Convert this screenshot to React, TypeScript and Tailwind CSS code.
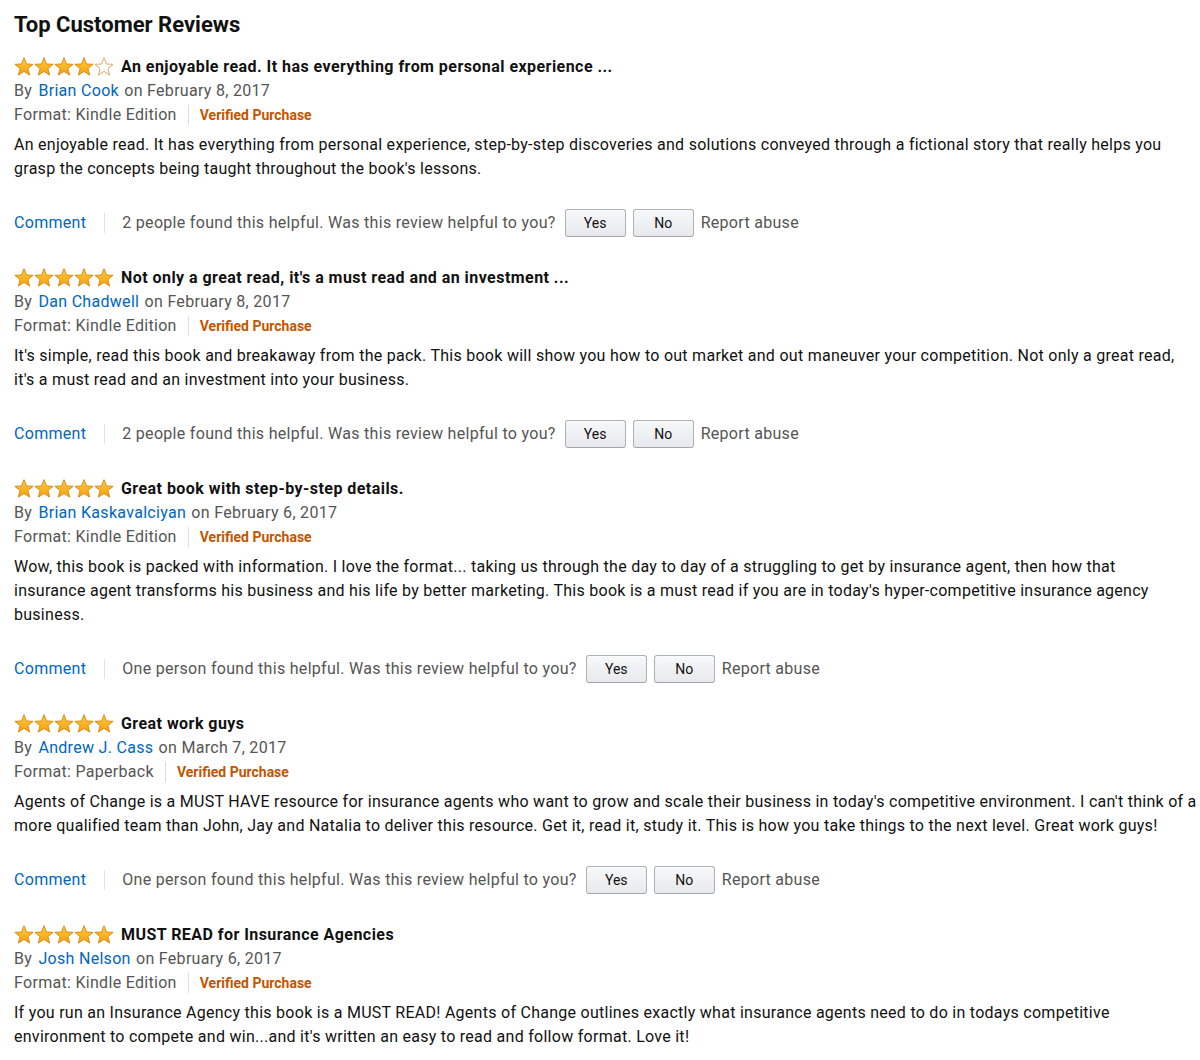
import { useId } from "react";

type Review = {
  stars: number;
  title: string;
  author: string;
  date: string;
  format: string;
  body: string[];
  helpful: string;
};

const reviews: Review[] = [
  {
    stars: 4,
    title: "An enjoyable read. It has everything from personal experience ...",
    author: "Brian Cook",
    date: "February 8, 2017",
    format: "Kindle Edition",
    body: [
      "An enjoyable read. It has everything from personal experience, step-by-step discoveries and solutions conveyed through a fictional story that really helps you",
      "grasp the concepts being taught throughout the book's lessons.",
    ],
    helpful: "2 people found this helpful. Was this review helpful to you?",
  },
  {
    stars: 5,
    title: "Not only a great read, it's a must read and an investment ...",
    author: "Dan Chadwell",
    date: "February 8, 2017",
    format: "Kindle Edition",
    body: [
      "It's simple, read this book and breakaway from the pack. This book will show you how to out market and out maneuver your competition. Not only a great read,",
      "it's a must read and an investment into your business.",
    ],
    helpful: "2 people found this helpful. Was this review helpful to you?",
  },
  {
    stars: 5,
    title: "Great book with step-by-step details.",
    author: "Brian Kaskavalciyan",
    date: "February 6, 2017",
    format: "Kindle Edition",
    body: [
      "Wow, this book is packed with information. I love the format... taking us through the day to day of a struggling to get by insurance agent, then how that",
      "insurance agent transforms his business and his life by better marketing. This book is a must read if you are in today's hyper-competitive insurance agency",
      "business.",
    ],
    helpful: "One person found this helpful. Was this review helpful to you?",
  },
  {
    stars: 5,
    title: "Great work guys",
    author: "Andrew J. Cass",
    date: "March 7, 2017",
    format: "Paperback",
    body: [
      "Agents of Change is a MUST HAVE resource for insurance agents who want to grow and scale their business in today's competitive environment. I can't think of a",
      "more qualified team than John, Jay and Natalia to deliver this resource. Get it, read it, study it. This is how you take things to the next level. Great work guys!",
    ],
    helpful: "One person found this helpful. Was this review helpful to you?",
  },
  {
    stars: 5,
    title: "MUST READ for Insurance Agencies",
    author: "Josh Nelson",
    date: "February 6, 2017",
    format: "Kindle Edition",
    body: [
      "If you run an Insurance Agency this book is a MUST READ! Agents of Change outlines exactly what insurance agents need to do in todays competitive",
      "environment to compete and win...and it's written an easy to read and follow format. Love it!",
    ],
    helpful: "",
  },
];

const STAR = "10,0.7 12.41,6.98 19.13,7.33 13.9,11.57 15.64,18.07 10,14.4 4.36,18.07 6.1,11.57 0.87,7.33 7.59,6.98";

function Star({ filled }: { filled: boolean }) {
  const id = useId().replace(/:/g, "");
  return (
    <svg width="20" height="20" viewBox="0 0 20 20" className="block">
      <defs>
        <linearGradient id={id} x1="0" y1="0" x2="0" y2="1">
          <stop offset="0" stopColor="#ffce3a" />
          <stop offset="1" stopColor="#f59f12" />
        </linearGradient>
      </defs>
      <polygon
        points={STAR}
        fill={filled ? `url(#${id})` : "#ffffff"}
        stroke={filled ? "#dc8c14" : "#dcab6a"}
        strokeWidth="1"
        strokeLinejoin="round"
      />
    </svg>
  );
}

function Stars({ n }: { n: number }) {
  return (
    <div className="flex">
      {[0, 1, 2, 3, 4].map((i) => (
        <Star key={i} filled={i < n} />
      ))}
    </div>
  );
}

function Btn({ label }: { label: string }) {
  return (
    <button className="h-[28px] w-[61px] rounded-[3px] border border-[#adb1b8] border-b-[#a2a6ac] bg-gradient-to-b from-[#f7f8fa] to-[#e7e9ec] text-[14px] leading-none tracking-normal text-[#111] shadow-[inset_0_1px_0_rgba(255,255,255,0.6)]">
      {label}
    </button>
  );
}

function ReviewItem({ r, last }: { r: Review; last: boolean }) {
  return (
    <div className="mt-[28px] first:mt-[15px]">
      <div className="flex h-[25px] items-center">
        <Stars n={r.stars} />
        <span className="ml-[7px] text-[16px] font-bold tracking-[0.45px] text-[#111]">{r.title}</span>
      </div>
      <div className="h-[24px] leading-[24px] text-[#555]">
        By <a className="ml-[2px] mr-[1px] text-[#0066c0]">{r.author}</a> on {r.date}
      </div>
      <div className="flex h-[24px] items-center text-[#555]">
        <span>Format: {r.format}</span>
        <span className="mx-[11px] h-[20px] w-px bg-[#ddd]" />
        <span className="text-[14px] font-bold tracking-normal text-[#c45500]">Verified Purchase</span>
      </div>
      <div className="mt-[6px] whitespace-nowrap leading-[24px] tracking-[0.27px] text-[#111]">
        {r.body.map((l, i) => (
          <div key={i}>{l}</div>
        ))}
      </div>
      {!last && (
        <div className="mt-[28px] flex h-[28px] items-center text-[#555]">
          <a className="text-[#0066c0]">Comment</a>
          <span className="ml-[18px] mr-[17px] h-[20px] w-px bg-[#e3e3e3]" />
          <span>{r.helpful}</span>
          <span className="ml-[9px] flex gap-[7px]">
            <Btn label="Yes" />
            <Btn label="No" />
          </span>
          <span className="ml-[7px]">Report abuse</span>
        </div>
      )}
    </div>
  );
}

export default function App() {
  return (
    <div className="min-h-[1060px] overflow-hidden bg-white px-[14px] font-[Roboto,sans-serif] text-[16px] tracking-[0.3px]">
      <h1 className="pt-[11px] text-[22px] font-bold leading-[28px] tracking-normal text-[#111]">Top Customer Reviews</h1>
      <div>
        {reviews.map((r, i) => (
          <ReviewItem key={i} r={r} last={i === reviews.length - 1} />
        ))}
      </div>
    </div>
  );
}
